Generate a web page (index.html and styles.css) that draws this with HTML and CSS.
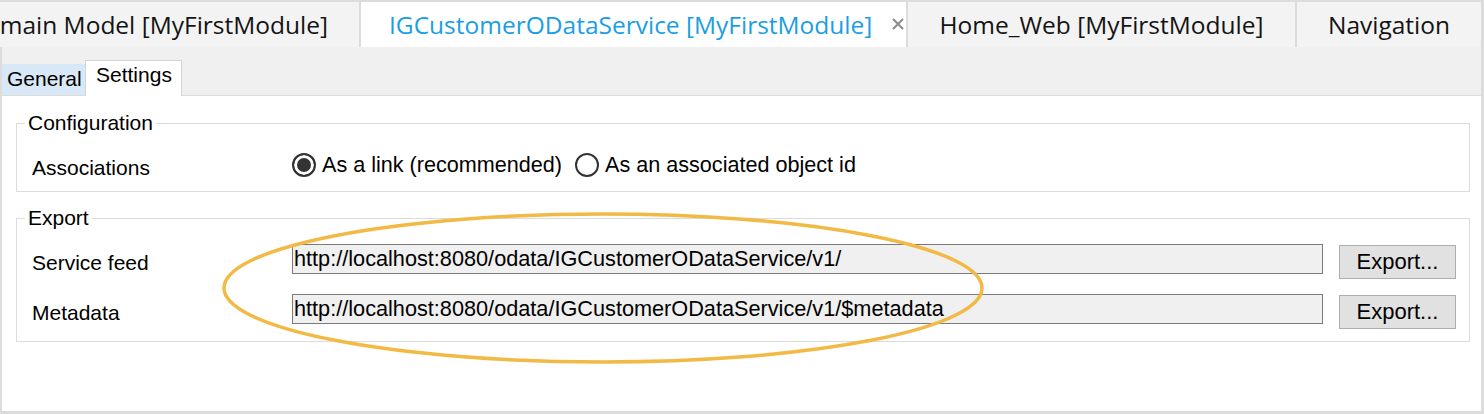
FILE: index.html
```html
<!DOCTYPE html>
<html lang="en">
<head>
<meta charset="utf-8">
<title>IGCustomerODataService</title>
<link rel="stylesheet" href="styles.css">
</head>
<body>
<div class="window">
  <div class="doc-tabs">
    <div class="doc-tab clipped"><span>Domain Model [MyFirstModule]</span></div>
    <div class="doc-tab active">
      <span>IGCustomerODataService [MyFirstModule]</span>
      <svg class="close" width="12" height="12" viewBox="0 0 12 12"><path d="M1 1 L11 11 M11 1 L1 11" stroke="#8c8c8c" stroke-width="2" fill="none"/></svg>
    </div>
    <div class="doc-tab w-home">Home_Web [MyFirstModule]</div>
    <div class="doc-tab w-nav">Navigation</div>
  </div>
  <div class="editor">
    <div class="sub-tabs">
      <div class="sub-tab">General</div>
      <div class="sub-tab selected">Settings</div>
    </div>
    <div class="page">
      <fieldset class="group">
        <legend>Configuration</legend>
        <div class="row config-row">
          <span class="label">Associations</span>
          <div class="radios">
            <span class="radio-option"><span class="radio checked"></span>As a link (recommended)</span>
            <span class="radio-option"><span class="radio"></span>As an associated object id</span>
          </div>
        </div>
      </fieldset>
      <fieldset class="group export">
        <legend>Export</legend>
        <div class="row field-row">
          <span class="label">Service feed</span>
          <input class="field" readonly value="http://localhost:8080/odata/IGCustomerODataService/v1/">
          <button class="btn">Export...</button>
        </div>
        <div class="row field-row">
          <span class="label">Metadata</span>
          <input class="field" readonly value="http://localhost:8080/odata/IGCustomerODataService/v1/$metadata">
          <button class="btn">Export...</button>
        </div>
      </fieldset>
    </div>
  </div>
  <svg class="highlight" width="1484" height="414" viewBox="0 0 1484 414">
    <ellipse cx="603" cy="288" rx="379" ry="74" fill="none" stroke="#f2b944" stroke-width="3.5"/>
  </svg>
</div>
</body>
</html>
```

FILE: styles.css
```css
* { box-sizing: border-box; }

body {
  margin: 0;
  background: #fff;
  font-family: "Liberation Sans", Arial, sans-serif;
  color: #000;
}

.window {
  position: relative;
  width: 1484px;
  height: 414px;
  display: flex;
  flex-direction: column;
  border-top: 2px solid #dcdcdc;
  background: #fff;
  overflow: hidden;
}

/* document tabs */
.doc-tabs {
  display: flex;
  gap: 2px;
  height: 45px;
  flex: none;
  background: #dcdcdc;
  font-family: "Open Sans", "Noto Sans", sans-serif;
  font-size: 24.5px;
}

.doc-tab {
  display: flex;
  align-items: center;
  justify-content: center;
  white-space: nowrap;
  overflow: hidden;
  background: #f3f3f3;
  color: #141414;
  padding-bottom: 1px;
}

.doc-tab.clipped {
  width: 359px;
  justify-content: flex-end;
  padding-right: 31px;
}

.doc-tab.active {
  width: 545px;
  background: #fff;
  color: #1a9ee4;
  justify-content: flex-start;
  padding-left: 28px;
}

.close {
  margin-left: auto;
  margin-right: 2px;
  flex: none;
}

.w-home { width: 387px; }
.w-nav { width: 184px; }

/* editor */
.editor {
  flex: 1;
  display: flex;
  flex-direction: column;
  border-left: 2px solid #dcdcdc;
  border-right: 3px solid #dcdcdc;
  border-bottom: 3px solid #dcdcdc;
}

.sub-tabs {
  height: 49px;
  flex: none;
  display: flex;
  align-items: flex-end;
  background: #f0f0f0;
  border-bottom: 1px solid #dcdcdc;
  font-size: 21px;
  line-height: 24px;
}

.sub-tab {
  height: 31px;
  padding: 3px 3px 0 5px;
  width: 83px;
  background: #d9e8f7;
}

.sub-tab.selected {
  width: 97px;
  height: 36px;
  margin-bottom: -1px;
  padding: 2px 9px 0 10px;
  background: #fff;
  border: 1px solid #d4d4d4;
  border-bottom: none;
}

.page {
  flex: 1;
  padding: 15px 11px 0 14px;
}

.group {
  margin: 0;
  padding: 0 13px 0 8px;
  border: 1px solid #dcdcdc;
  min-width: 0;
}

.group legend {
  padding: 0 3px;
  font-size: 21px;
  line-height: 24px;
}

.group.export {
  margin-top: 14px;
  padding-bottom: 11px;
}

.row {
  display: grid;
  grid-template-columns: 260px 1fr 117px;
  align-items: start;
  padding-left: 7px;
}

.label {
  font-size: 21px;
  line-height: 24px;
}

.config-row {
  grid-template-columns: 260px 1fr;
  height: 36px;
  margin: 12px 0 8px;
}

.config-row .label { padding-top: 9px; }

.radios {
  display: flex;
  align-items: center;
  gap: 13px;
  margin-top: 6px;
  font-size: 21.6px;
  line-height: 24px;
}

.radio-option {
  display: flex;
  align-items: center;
  gap: 6px;
}

.radio {
  width: 24px;
  height: 24px;
  border: 2px solid #333;
  border-radius: 50%;
  background: #fff;
}

.radio.checked {
  background: #333;
  box-shadow: inset 0 0 0 3px #fff;
}

.field-row {
  height: 36px;
  margin-top: 14px;
}

.field-row .label { padding-top: 7px; }

.field {
  height: 30px;
  width: 100%;
  margin: 0;
  padding: 0 1px;
  border: 1px solid #7a7a7a;
  border-radius: 0;
  background: #f0f0f0;
  font-family: "Liberation Sans", Arial, sans-serif;
  font-size: 21.7px;
  color: #000;
  outline: none;
}

.btn {
  height: 34px;
  width: 117px;
  margin: 1px 0 0 0;
  grid-column: 3;
  border: 1px solid #adadad;
  border-radius: 0;
  background: #e1e1e1;
  font-family: "Liberation Sans", Arial, sans-serif;
  font-size: 22px;
  color: #000;
  padding: 0;
}

.field-row .field { grid-column: 2; width: calc(100% - 16px); }

.highlight {
  position: absolute;
  left: 0;
  top: -2px;
  pointer-events: none;
}
```
